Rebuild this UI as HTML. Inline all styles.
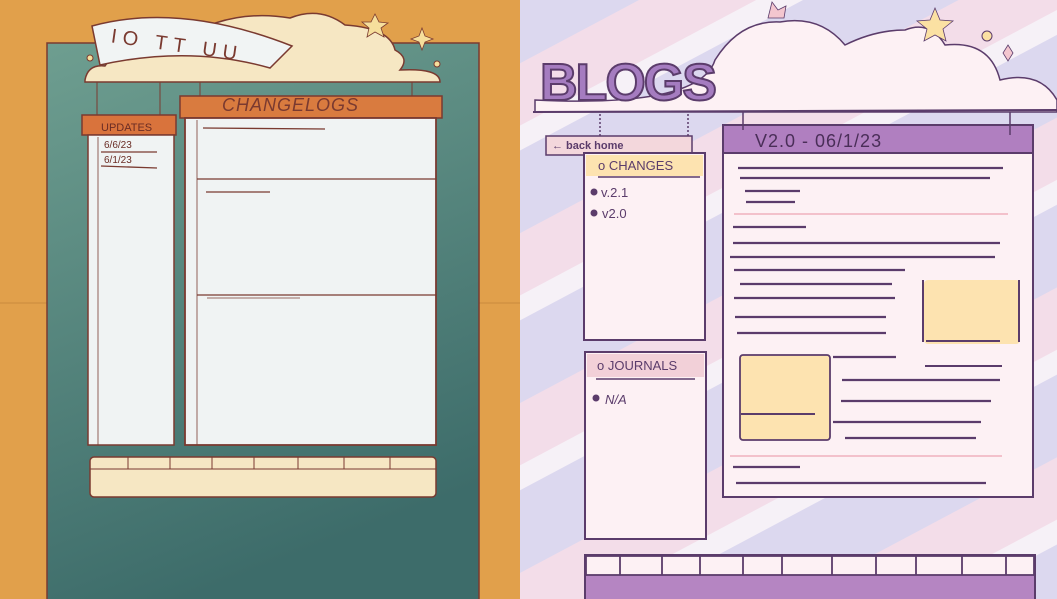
<!DOCTYPE html>
<html><head><meta charset="utf-8"><style>
html,body{margin:0;padding:0;width:1057px;height:599px;overflow:hidden;background:#e1a04b}
svg{display:block}
text{font-family:"Liberation Sans",sans-serif}
</style></head><body>
<svg width="1057" height="599" viewBox="0 0 1057 599" xmlns="http://www.w3.org/2000/svg">
<defs>
<linearGradient id="teal" x1="0" y1="0" x2="0.3" y2="1">
<stop offset="0" stop-color="#6e9e90"/><stop offset="1" stop-color="#3d6c6a"/></linearGradient>
<pattern id="stripes" width="150" height="150" patternUnits="userSpaceOnUse" patternTransform="rotate(-28)">
<rect width="150" height="150" fill="#dcd8ef"/>
<rect y="0" width="150" height="55" fill="#f3dde9"/>
<rect y="55" width="150" height="22" fill="#f6f1f7"/>
</pattern>
</defs>
<!-- LEFT -->
<rect x="0" y="0" width="520" height="599" fill="#e1a04b"/>
<line x1="0" y1="303" x2="520" y2="303" stroke="#c98a3c" stroke-width="1"/>
<rect x="47" y="43" width="432" height="560" fill="url(#teal)" stroke="#7a3a30" stroke-width="1.5"/>
<path d="M85 80 Q88 64 105 66 Q125 35 180 40 Q230 8 290 18 Q320 6 345 25 Q390 28 395 50 Q410 58 400 70 Q440 68 440 82 L85 82 Z" fill="#f6e7c3" stroke="#7a3a30" stroke-width="1.5"/>
<path d="M92 26 Q180 2 292 46 L270 68 Q190 45 100 65 Z" fill="#f1f4f4" stroke="#7a3a30" stroke-width="1.5"/>
<text x="110" y="52" font-size="20" fill="#7a3a30" font-family="Liberation Mono" letter-spacing="6" transform="rotate(8 180 50)">IO TT UU</text>
<path d="M375 14 l4 8 9 1 -7 5 3 9 -9 -5 -8 5 2 -9 -7 -6 9 0z" fill="#f6df9c" stroke="#7a3a30" stroke-width="0.8"/>
<path d="M422 28 l3 8 8 3 -8 3 -3 8 -3 -8 -8 -3 8 -3z" fill="#f6df9c" stroke="#7a3a30" stroke-width="0.8"/>
<circle cx="90" cy="58" r="3" fill="#f6df9c" stroke="#7a3a30"/><circle cx="437" cy="64" r="3" fill="#f6df9c" stroke="#7a3a30"/>
<line x1="97" y1="82" x2="97" y2="115" stroke="#7a3a30"/><line x1="160" y1="82" x2="160" y2="115" stroke="#7a3a30"/>
<line x1="200" y1="82" x2="200" y2="98" stroke="#7a3a30"/><line x1="412" y1="82" x2="412" y2="98" stroke="#7a3a30"/>
<rect x="82" y="115" width="94" height="20" fill="#d9733c" stroke="#7a3a30" stroke-width="1.5"/>
<text x="101" y="131" font-size="11" fill="#6a2c24">UPDATES</text>
<rect x="88" y="135" width="86" height="310" fill="#f0f3f3" stroke="#7a3a30" stroke-width="1.5"/>
<line x1="98" y1="137" x2="98" y2="445" stroke="#7a3a30" stroke-width="0.8"/>
<text x="104" y="148" font-size="10" fill="#6a2c24">6/6/23</text>
<line x1="101" y1="152" x2="157" y2="152" stroke="#7a3a30" stroke-width="1.3"/>
<text x="104" y="163" font-size="10" fill="#6a2c24">6/1/23</text>
<line x1="101" y1="166" x2="157" y2="168" stroke="#7a3a30" stroke-width="1.3"/>
<rect x="180" y="96" width="262" height="22" fill="#d97b3f" stroke="#7a3a30" stroke-width="1.5"/>
<text x="222" y="111" font-size="18" fill="#7a3a30" font-style="italic" letter-spacing="1">CHANGELOGS</text>
<rect x="185" y="118" width="251" height="327" fill="#f0f3f3" stroke="#7a3a30" stroke-width="1.8"/>
<line x1="197" y1="120" x2="197" y2="445" stroke="#7a3a30" stroke-width="0.8"/>
<line x1="203" y1="128" x2="325" y2="129" stroke="#7a3a30" stroke-width="1.3"/>
<line x1="197" y1="179" x2="436" y2="179" stroke="#7a3a30" stroke-width="1.3"/>
<line x1="206" y1="192" x2="270" y2="192" stroke="#7a3a30" stroke-width="1.3"/>
<line x1="197" y1="295" x2="436" y2="295" stroke="#7a3a30" stroke-width="1.3"/>
<line x1="207" y1="298" x2="300" y2="298" stroke="#7a3a30" stroke-width="0.8"/>
<rect x="90" y="457" width="346" height="40" rx="4" fill="#f6e7c3" stroke="#7a3a30" stroke-width="1.5"/>
<line x1="90" y1="469" x2="436" y2="469" stroke="#7a3a30"/>
<g stroke="#7a3a30"><line x1="128" y1="457" x2="128" y2="469"/><line x1="170" y1="457" x2="170" y2="469"/><line x1="212" y1="457" x2="212" y2="469"/><line x1="254" y1="457" x2="254" y2="469"/><line x1="298" y1="457" x2="298" y2="469"/><line x1="344" y1="457" x2="344" y2="469"/><line x1="390" y1="457" x2="390" y2="469"/></g>
<!-- RIGHT -->
<rect x="520" y="0" width="537" height="599" fill="url(#stripes)"/>
<path d="M535 112 L535 100 Q700 108 715 60 Q740 20 780 22 Q820 15 845 45 Q875 30 905 30 Q930 20 945 45 Q990 40 1000 80 Q1040 70 1057 100 L1057 112 Z" fill="#fdf1f4" stroke="#5b3c6b" stroke-width="1.5"/>
<line x1="533" y1="112" x2="1057" y2="110" stroke="#5b3c6b" stroke-width="2"/>
<path d="M772 2 l6 8 8 -4 -2 12 -16 0z" fill="#f3c6cf" stroke="#5b3c6b" stroke-width="0.8"/>
<path d="M935 8 l5 12 13 1 -10 8 3 12 -11 -6 -11 6 3 -12 -10 -8 13 -1z" fill="#fbe1a3" stroke="#5b3c6b" stroke-width="0.8"/>
<circle cx="987" cy="36" r="5" fill="#fbe1a3" stroke="#5b3c6b"/>
<path d="M1008 45 l5 8 -5 8 -5 -8z" fill="#f3c6cf" stroke="#5b3c6b" stroke-width="0.8"/>
<text x="540" y="100" font-size="52" font-weight="bold" fill="#a57cc0" stroke="#5b3c6b" stroke-width="2" font-family="DejaVu Sans" letter-spacing="-2">BLOGS</text>
<line x1="600" y1="114" x2="600" y2="136" stroke="#5b3c6b" stroke-width="1.5" stroke-dasharray="2 2"/>
<line x1="688" y1="114" x2="688" y2="155" stroke="#5b3c6b" stroke-width="1.5" stroke-dasharray="2 2"/>
<rect x="546" y="136" width="146" height="19" fill="#f3d7dc" stroke="#5b3c6b" stroke-width="1.5"/>
<text x="552" y="149" font-size="11" font-weight="bold" fill="#5b3c6b">← back home</text>
<rect x="584" y="153" width="121" height="187" fill="#fdf1f4" stroke="#5b3c6b" stroke-width="2"/>
<rect x="586" y="155" width="117" height="21" fill="#fde3b0"/>
<text x="598" y="170" font-size="13" fill="#5b3c6b">o CHANGES</text>
<line x1="598" y1="177" x2="700" y2="177" stroke="#5b3c6b" stroke-width="1.5"/>
<circle cx="594" cy="192" r="3.5" fill="#5b3c6b"/><text x="601" y="197" font-size="13" fill="#5b3c6b">v.2.1</text>
<circle cx="594" cy="213" r="3.5" fill="#5b3c6b"/><text x="602" y="218" font-size="13" fill="#5b3c6b">v2.0</text>
<rect x="585" y="352" width="121" height="187" fill="#fdf1f4" stroke="#5b3c6b" stroke-width="2"/>
<rect x="587" y="354" width="117" height="23" fill="#f2d0d8"/>
<text x="597" y="370" font-size="13" fill="#5b3c6b">o JOURNALS</text>
<line x1="596" y1="379" x2="695" y2="379" stroke="#5b3c6b" stroke-width="1.5"/>
<circle cx="596" cy="398" r="3.5" fill="#5b3c6b"/><text x="605" y="404" font-size="13" fill="#5b3c6b" font-style="italic">N/A</text>
<rect x="723" y="125" width="310" height="372" fill="#fdf1f4" stroke="#5b3c6b" stroke-width="2"/>
<rect x="723" y="125" width="310" height="28" fill="#b07fc0" stroke="#5b3c6b" stroke-width="2"/>
<text x="755" y="147" font-size="18" fill="#4a2e58" letter-spacing="1">V2.0 - 06/1/23</text>
<line x1="743" y1="112" x2="743" y2="130" stroke="#5b3c6b" stroke-width="1.5"/><line x1="1010" y1="112" x2="1010" y2="135" stroke="#5b3c6b" stroke-width="1.5"/>
<g stroke="#5b3c6b" stroke-width="2.3">
<line x1="738" y1="168" x2="1003" y2="168"/><line x1="740" y1="178" x2="990" y2="178"/>
<line x1="745" y1="191" x2="800" y2="191"/><line x1="746" y1="202" x2="795" y2="202"/>
<line x1="733" y1="227" x2="806" y2="227"/>
<line x1="733" y1="243" x2="1000" y2="243"/><line x1="730" y1="257" x2="995" y2="257"/>
<line x1="734" y1="270" x2="905" y2="270"/><line x1="740" y1="284" x2="892" y2="284"/>
<line x1="734" y1="298" x2="895" y2="298"/><line x1="735" y1="317" x2="886" y2="317"/><line x1="737" y1="333" x2="886" y2="333"/>
<line x1="833" y1="357" x2="896" y2="357"/><line x1="842" y1="380" x2="1000" y2="380"/>
<line x1="841" y1="401" x2="991" y2="401"/><line x1="833" y1="422" x2="981" y2="422"/>
<line x1="845" y1="438" x2="976" y2="438"/><line x1="733" y1="467" x2="800" y2="467"/><line x1="736" y1="483" x2="986" y2="483"/>
</g>
<line x1="734" y1="214" x2="1008" y2="214" stroke="#f3c1cb" stroke-width="2"/>
<line x1="730" y1="456" x2="1002" y2="456" stroke="#f3c1cb" stroke-width="2"/>
<rect x="924" y="280" width="96" height="64" rx="4" fill="#fde3b0"/>
<line x1="923" y1="280" x2="923" y2="342" stroke="#5b3c6b" stroke-width="2"/>
<line x1="1019" y1="280" x2="1019" y2="342" stroke="#5b3c6b" stroke-width="2"/>
<line x1="926" y1="341" x2="1000" y2="341" stroke="#5b3c6b" stroke-width="2"/>
<line x1="925" y1="366" x2="1002" y2="366" stroke="#5b3c6b" stroke-width="2"/>
<rect x="740" y="355" width="90" height="85" rx="3" fill="#fde3b0" stroke="#5b3c6b" stroke-width="1.8"/>
<line x1="741" y1="414" x2="815" y2="414" stroke="#5b3c6b" stroke-width="2"/>
<rect x="585" y="555" width="450" height="50" fill="#b585c2" stroke="#5b3c6b" stroke-width="2"/>
<rect x="586" y="556" width="448" height="19" fill="#fdf1f4" stroke="#5b3c6b" stroke-width="1.8"/>
<g stroke="#5b3c6b" stroke-width="1.8"><line x1="620" y1="556" x2="620" y2="575"/><line x1="662" y1="556" x2="662" y2="575"/><line x1="700" y1="556" x2="700" y2="575"/><line x1="743" y1="556" x2="743" y2="575"/><line x1="782" y1="556" x2="782" y2="575"/><line x1="832" y1="556" x2="832" y2="575"/><line x1="876" y1="556" x2="876" y2="575"/><line x1="916" y1="556" x2="916" y2="575"/><line x1="962" y1="556" x2="962" y2="575"/><line x1="1006" y1="556" x2="1006" y2="575"/></g>
</svg>
</body></html>
